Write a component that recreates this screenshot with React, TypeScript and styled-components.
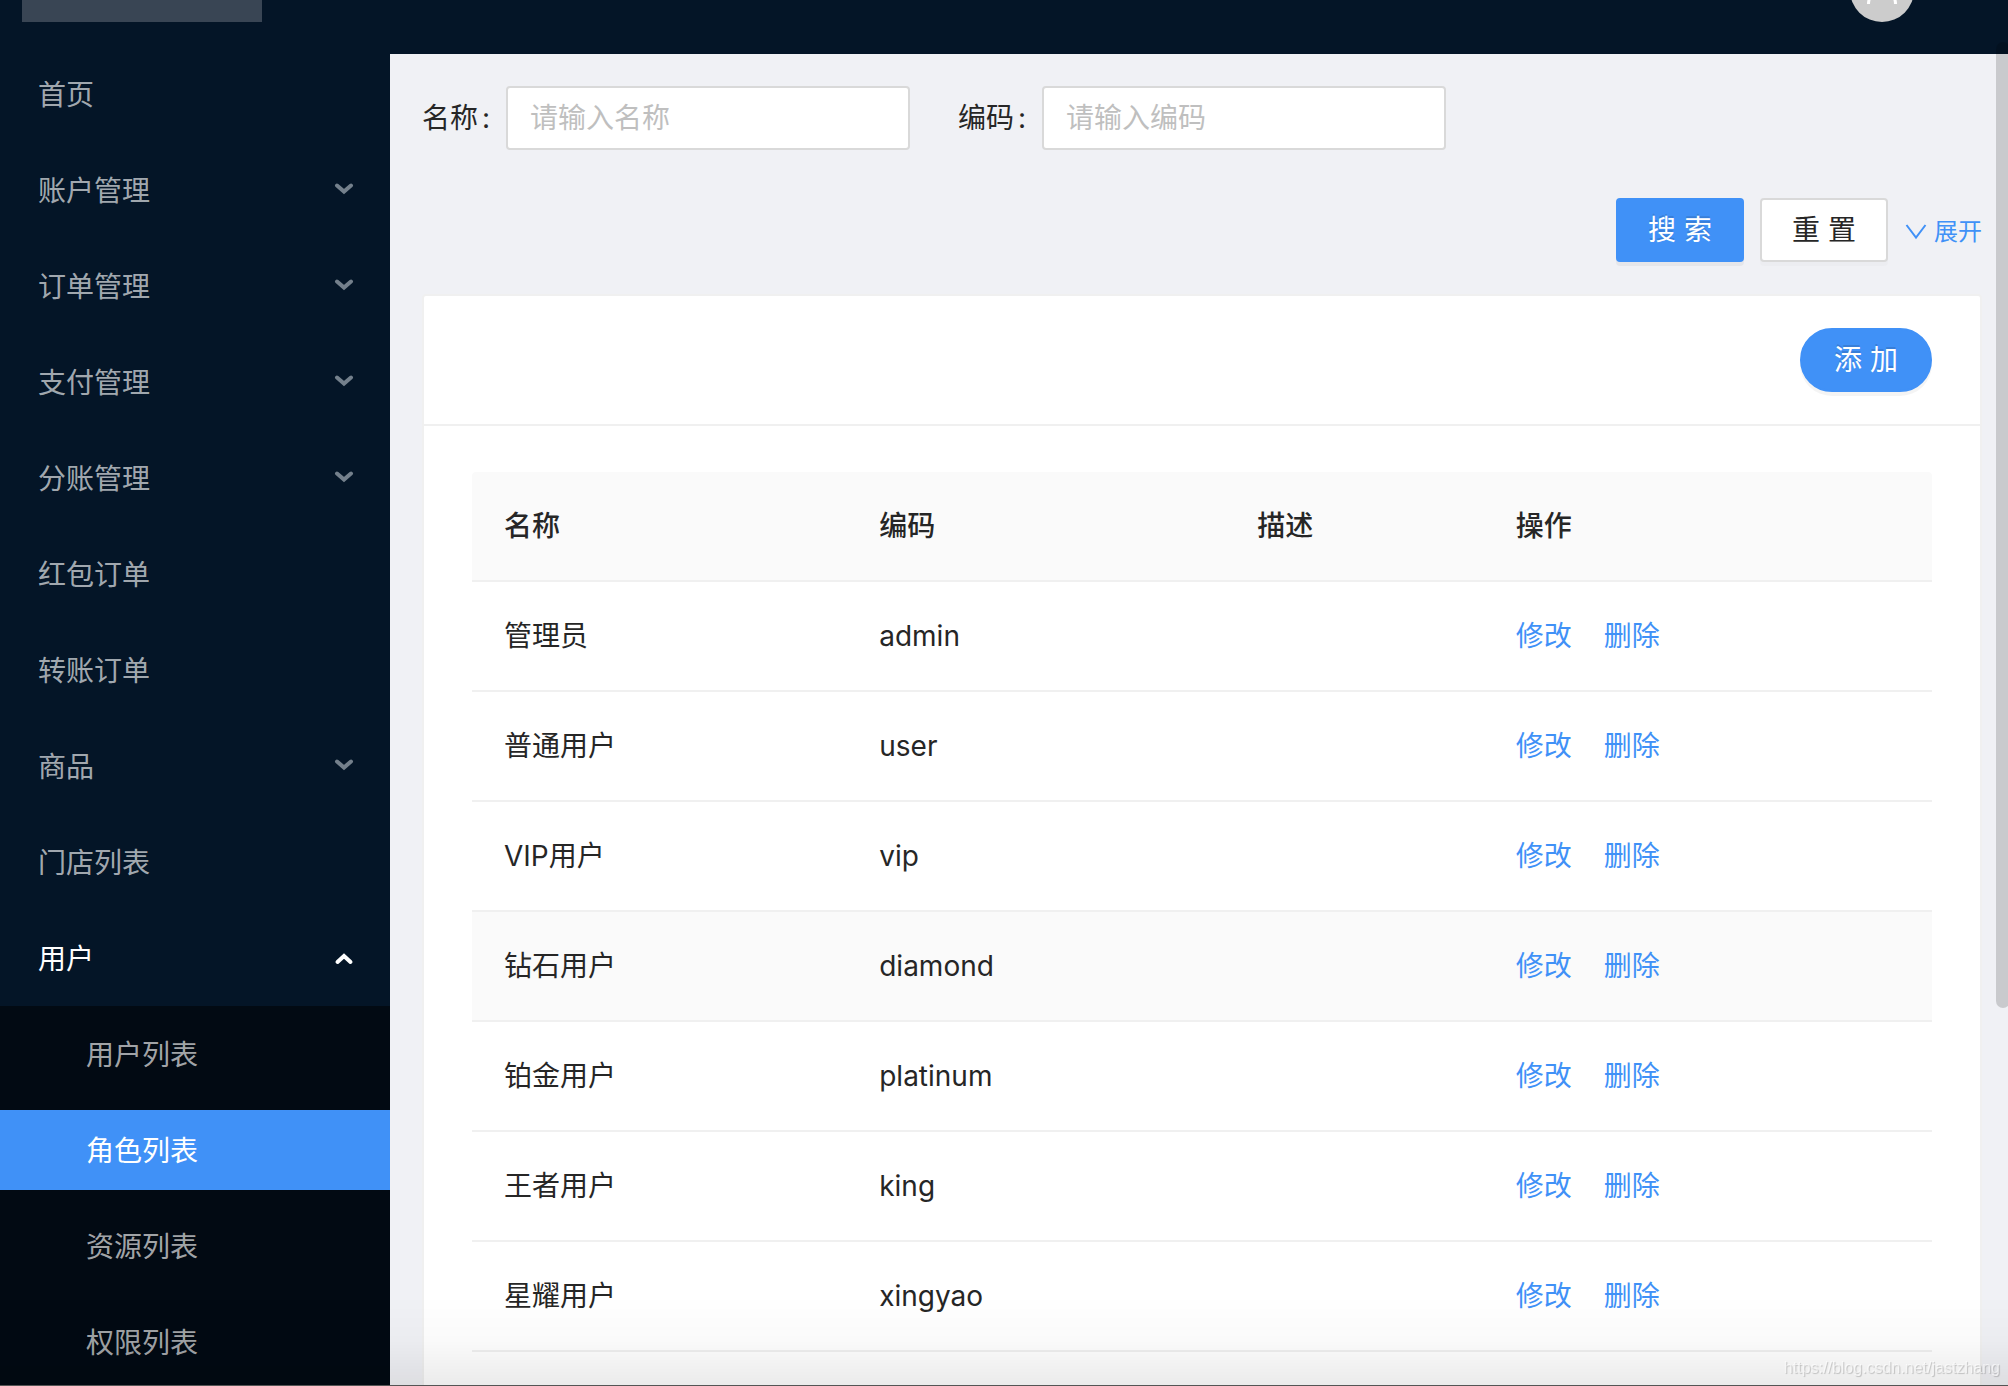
import React from 'react';
import styled, { createGlobalStyle, css } from 'styled-components';

const blue = '#4091f7';
const navy = '#041527';

const GlobalStyle = createGlobalStyle`
  *, *::before, *::after { box-sizing: border-box; }
  html, body { margin: 0; height: 100%; overflow: hidden; }
  body, button, input {
    font-family: Inter, "Noto Sans CJK SC", sans-serif;
    font-size: 28px;
    line-height: 44px;
    color: #262626;
  }
  #root { height: 100%; }
`;

const Page = styled.div`
  height: 100vh;
  display: flex;
  flex-direction: column;
  overflow: hidden;
  background: #f0f1f5;
`;

const Header = styled.header`
  flex: none;
  height: 54px;
  display: flex;
  justify-content: space-between;
  align-items: flex-end;
  padding: 0 94px 32px 22px;
  background: ${navy};
`;

const LogoSlot = styled.div`
  width: 240px;
  height: 22px;
  background: #394554;
`;

const Avatar = styled.svg`
  display: block;
  width: 64px;
  height: 64px;
`;

const Body = styled.div`
  flex: 1;
  min-height: 0;
  display: flex;
`;

const Sidebar = styled.nav`
  flex: none;
  width: 390px;
  overflow: hidden;
  background: ${navy};
`;

const Menu = styled.ul`
  list-style: none;
  margin: 0;
  padding: 0;
  display: flex;
  flex-direction: column;
  gap: 16px;
`;

const SubMenu = styled(Menu)`
  margin-top: 8px;
  padding: 8px 0;
  background: #020a13;
`;

const menuEntry = css`
  width: 100%;
  height: 80px;
  display: flex;
  align-items: center;
  justify-content: space-between;
  border: 0;
  text-decoration: none;
  cursor: pointer;
`;

const MenuLink = styled.a<{ $nested?: boolean; $selected?: boolean }>`
  ${menuEntry}
  padding: 2px 36px 0 ${p => (p.$nested ? 86 : 38)}px;
  background: ${p => (p.$selected ? blue : 'transparent')};
  color: ${p => (p.$selected ? '#fff' : 'rgba(255, 255, 255, 0.65)')};
`;

const MenuToggle = styled.button<{ $open?: boolean }>`
  ${menuEntry}
  padding: 2px 36px 0 38px;
  background: transparent;
  color: ${p => (p.$open ? '#fff' : 'rgba(255, 255, 255, 0.65)')};
`;

const Arrow = styled.svg<{ $open?: boolean }>`
  width: 20px;
  height: 16px;
  fill: none;
  stroke: ${p => (p.$open ? '#fff' : '#74808c')};
  stroke-width: 4;
  stroke-linecap: round;
`;

const Main = styled.main`
  flex: 1;
  min-width: 0;
  overflow: hidden;
  padding: 32px 26px 0 32px;
`;

const SearchForm = styled.form`
  display: grid;
  grid-template-columns: repeat(3, minmax(0, 1fr));
  gap: 48px;
  margin-bottom: 32px;
`;

const Field = styled.div`
  display: flex;
  align-items: center;
  gap: 16px;
`;

const FieldLabel = styled.label`
  flex: none;
  width: 68px;
  white-space: nowrap;
  &::after { content: ":"; margin-left: 4px; }
`;

const TextInput = styled.input`
  flex: 1;
  min-width: 0;
  height: 64px;
  padding: 0 22px;
  border: 2px solid #d9d9d9;
  border-radius: 4px;
  background: #fff;
  &::placeholder { color: #bfbfbf; opacity: 1; }
`;

const FormActions = styled.div`
  grid-column: 1 / -1;
  display: flex;
  justify-content: flex-end;
  align-items: center;
  gap: 16px;
`;

const Button = styled.button<{ $primary?: boolean; $round?: boolean }>`
  height: 64px;
  min-width: ${p => (p.$round ? 132 : 128)}px;
  padding: 0 28px;
  white-space: nowrap;
  cursor: pointer;
  border-radius: ${p => (p.$round ? 32 : 4)}px;
  ${p =>
    p.$primary
      ? css`
          border: 2px solid ${blue};
          background: ${blue};
          color: #fff;
          text-shadow: 0 -2px 0 rgba(0, 0, 0, 0.12);
          box-shadow: 0 4px 0 rgba(0, 0, 0, 0.045);
        `
      : css`
          border: 2px solid #d9d9d9;
          background: #fff;
          box-shadow: 0 4px 0 rgba(0, 0, 0, 0.016);
        `}
`;

const ExpandLink = styled.a`
  display: flex;
  align-items: center;
  gap: 6px;
  padding-top: 4px;
  font-size: 24px;
  color: ${blue};
  text-decoration: none;
  svg { width: 24px; height: 24px; fill: none; stroke: currentColor; stroke-width: 2; }
`;

const Card = styled.section`
  border: 2px solid #f0f0f0;
  border-radius: 4px;
  background: #fff;
`;

const CardHead = styled.div`
  display: flex;
  justify-content: flex-end;
  padding: 32px 48px;
  border-bottom: 2px solid #f0f0f0;
`;

const CardBody = styled.div`
  padding: 46px 48px;
`;

const Table = styled.table`
  width: 100%;
  table-layout: fixed;
  border-collapse: separate;
  border-spacing: 0;
  th, td {
    padding: 32px;
    text-align: left;
    border-bottom: 2px solid #f0f0f0;
  }
  th { background: #fafafa; font-weight: 500; }
  th:first-child { border-top-left-radius: 4px; }
  th:last-child { border-top-right-radius: 4px; }
`;

const HeadCell = styled.th<{ $width?: string }>`
  width: ${p => p.$width ?? 'auto'};
`;

const Row = styled.tr<{ $active?: boolean }>`
  background: ${p => (p.$active ? '#fafafa' : '#fff')};
`;

const RowActions = styled.div`
  display: flex;
  gap: 32px;
  a { color: ${blue}; text-decoration: none; }
`;

const ScrollThumb = styled.div`
  position: fixed;
  top: 42px;
  right: -2px;
  width: 14px;
  height: 966px;
  border-radius: 7px;
  background: rgba(0, 0, 0, 0.16);
`;

const BottomShade = styled.div`
  position: fixed;
  inset: auto 0 0 0;
  height: 90px;
  pointer-events: none;
  border-bottom: 1px solid #555;
  background: linear-gradient(rgba(0, 0, 0, 0), rgba(0, 0, 0, 0.02) 50%, rgba(0, 0, 0, 0.08));
`;

const Watermark = styled.div`
  position: fixed;
  right: 8px;
  bottom: 4px;
  font: 16px/28px "Liberation Sans", sans-serif;
  color: rgba(255, 255, 255, 0.6);
  text-shadow: 1px 1px 1px rgba(0, 0, 0, 0.2);
`;

type Entry = { label: string; expandable?: boolean };

const entries: Entry[] = [
  { label: '首页' },
  { label: '账户管理', expandable: true },
  { label: '订单管理', expandable: true },
  { label: '支付管理', expandable: true },
  { label: '分账管理', expandable: true },
  { label: '红包订单' },
  { label: '转账订单' },
  { label: '商品', expandable: true },
  { label: '门店列表' },
];

const userEntries = ['用户列表', '角色列表', '资源列表', '权限列表'];

const roles = [
  ['管理员', 'admin'],
  ['普通用户', 'user'],
  ['VIP用户', 'vip'],
  ['钻石用户', 'diamond'],
  ['铂金用户', 'platinum'],
  ['王者用户', 'king'],
  ['星耀用户', 'xingyao'],
];

const MenuArrow = ({ open }: { open?: boolean }) => (
  <Arrow $open={open} viewBox="0 0 20 16" aria-hidden="true">
    <path d={open ? 'M3.5 11 L10 5 L16.5 11' : 'M3 2.5 L10 8.5 L17 2.5'} />
  </Arrow>
);

export default function App() {
  return (
    <Page>
      <GlobalStyle />
      <Header>
        <LogoSlot />
        <Avatar viewBox="0 0 64 64" role="img" aria-label="avatar">
          <circle cx="32" cy="32" r="32" fill="#ccc" />
          <g fill="none" stroke="#fff" strokeWidth="3">
            <circle cx="32" cy="24" r="8" />
            <path d="M18.5 46 C18.5 28 45.5 28 45.5 46" />
          </g>
        </Avatar>
      </Header>
      <Body>
        <Sidebar>
          <Menu>
            {entries.map(e => (
              <li key={e.label}>
                {e.expandable ? (
                  <MenuToggle type="button" aria-expanded={false}>
                    {e.label}
                    <MenuArrow />
                  </MenuToggle>
                ) : (
                  <MenuLink href="#">{e.label}</MenuLink>
                )}
              </li>
            ))}
            <li>
              <MenuToggle type="button" $open aria-expanded>
                用户
                <MenuArrow open />
              </MenuToggle>
              <SubMenu>
                {userEntries.map(label => (
                  <li key={label}>
                    <MenuLink href="#" $nested $selected={label === '角色列表'}>
                      {label}
                    </MenuLink>
                  </li>
                ))}
              </SubMenu>
            </li>
          </Menu>
        </Sidebar>
        <Main>
          <SearchForm onSubmit={e => e.preventDefault()}>
            <Field>
              <FieldLabel htmlFor="name">名称</FieldLabel>
              <TextInput id="name" type="text" placeholder="请输入名称" />
            </Field>
            <Field>
              <FieldLabel htmlFor="code">编码</FieldLabel>
              <TextInput id="code" type="text" placeholder="请输入编码" />
            </Field>
            <FormActions>
              <Button type="submit" $primary>搜 索</Button>
              <Button type="reset">重 置</Button>
              <ExpandLink href="#">
                <svg viewBox="0 0 24 24" aria-hidden="true">
                  <path d="M2.5 5 L12 17.5 L21.5 5" />
                </svg>
                展开
              </ExpandLink>
            </FormActions>
          </SearchForm>
          <Card>
            <CardHead>
              <Button type="button" $primary $round>添 加</Button>
            </CardHead>
            <CardBody>
              <Table>
                <thead>
                  <tr>
                    <HeadCell $width="25.7%">名称</HeadCell>
                    <HeadCell $width="25.9%">编码</HeadCell>
                    <HeadCell $width="17.7%">描述</HeadCell>
                    <HeadCell>操作</HeadCell>
                  </tr>
                </thead>
                <tbody>
                  {roles.map(([name, code]) => (
                    <Row key={code} $active={code === 'diamond'}>
                      <td>{name}</td>
                      <td>{code}</td>
                      <td />
                      <td>
                        <RowActions>
                          <a href="#">修改</a>
                          <a href="#">删除</a>
                        </RowActions>
                      </td>
                    </Row>
                  ))}
                </tbody>
              </Table>
            </CardBody>
          </Card>
        </Main>
      </Body>
      <ScrollThumb />
      <BottomShade />
      <Watermark>https://blog.csdn.net/jastzhang</Watermark>
    </Page>
  );
}
